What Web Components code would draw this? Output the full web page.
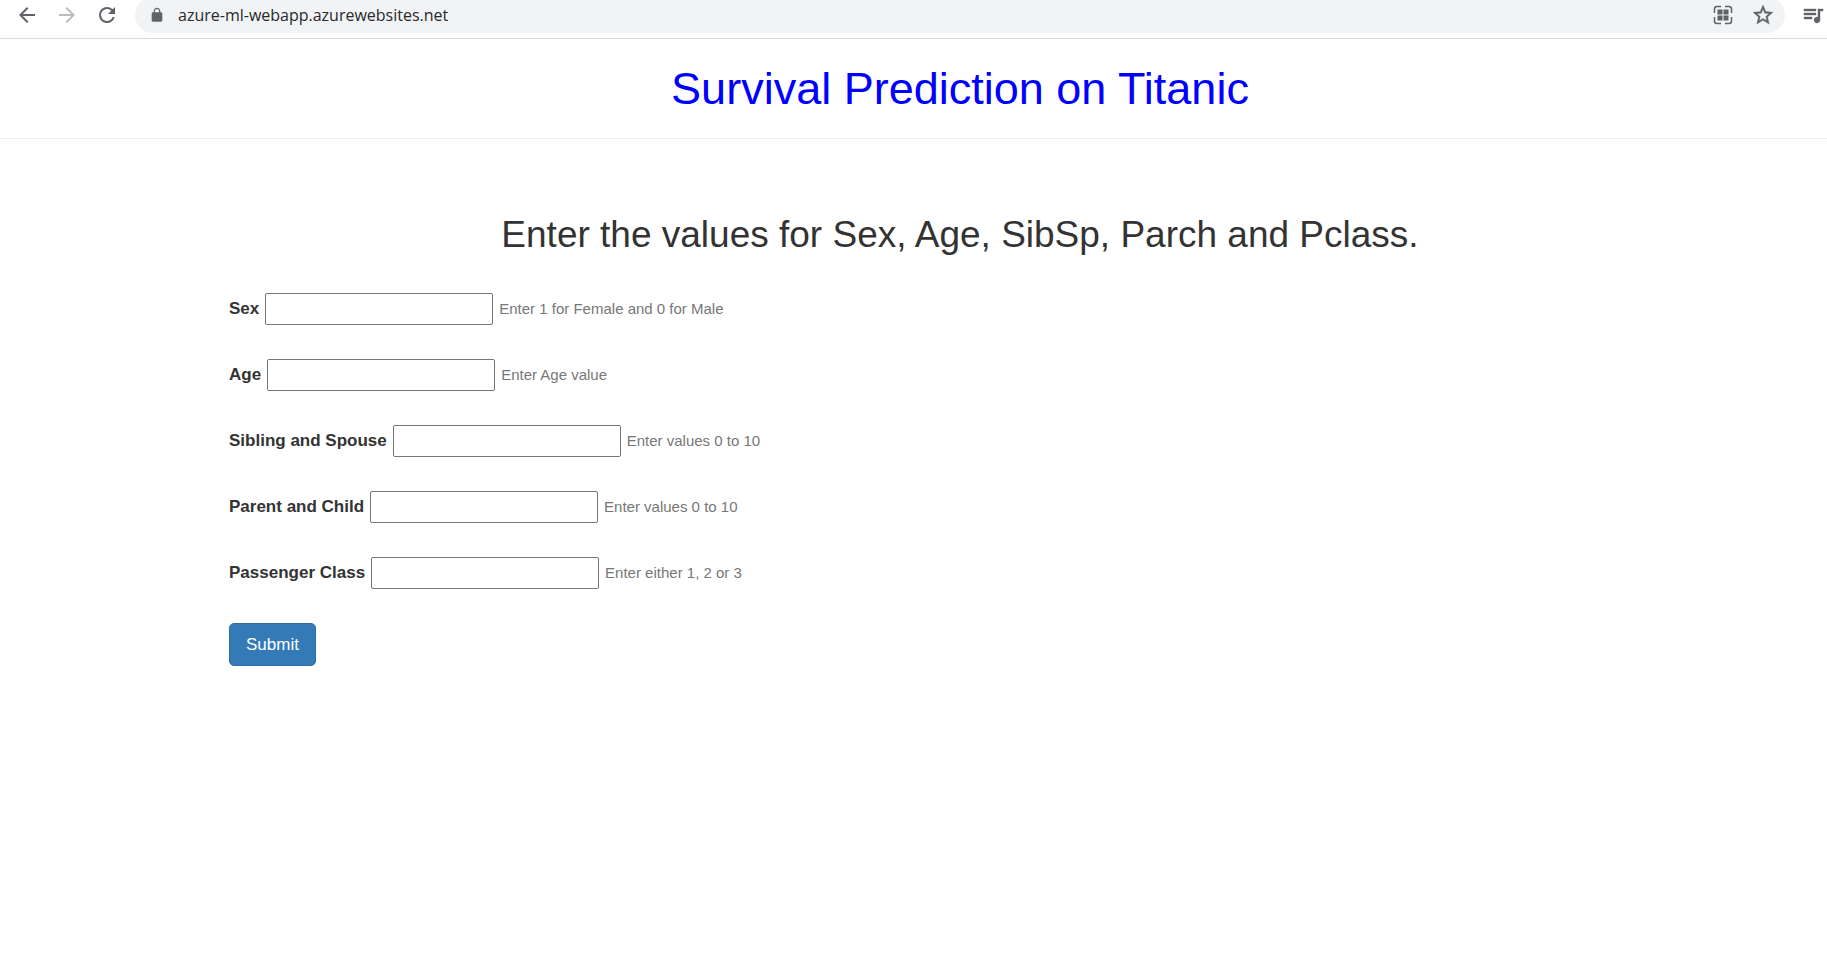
<!DOCTYPE html>
<html lang="en">
<head>
<meta charset="utf-8">
<title>Survival Prediction on Titanic</title>
<style>
body { margin: 0; background: #fff; color: #333; font-family: "Liberation Sans", Arial, sans-serif; }
</style>
</head>
<body>
<browser-bar address="azure-ml-webapp.azurewebsites.net"></browser-bar>
<page-header>Survival Prediction on Titanic</page-header>
<prediction-form>
  <span slot="heading">Enter the values for Sex, Age, SibSp, Parch and Pclass.</span>
  <form-field label="Sex" hint="Enter 1 for Female and 0 for Male"></form-field>
  <form-field label="Age" hint="Enter Age value"></form-field>
  <form-field label="Sibling and Spouse" hint="Enter values 0 to 10"></form-field>
  <form-field label="Parent and Child" hint="Enter values 0 to 10"></form-field>
  <form-field label="Passenger Class" hint="Enter either 1, 2 or 3"></form-field>
  <submit-button>Submit</submit-button>
</prediction-form>
<script>
const icons = {
  back: '<path d="M20 11H7.83l5.59-5.59L12 4l-8 8 8 8 1.41-1.41L7.83 13H20v-2z"/>',
  forward: '<path d="M12 4l-1.41 1.41L16.17 11H4v2h12.17l-5.58 5.59L12 20l8-8z"/>',
  reload: '<path d="M17.65 6.35A7.96 7.96 0 0 0 12 4a8 8 0 1 0 7.73 10h-2.08A6 6 0 1 1 12 6c1.66 0 3.14.69 4.22 1.78L13 11h7V4l-2.35 2.35z"/>',
  lock: '<path d="M18 8h-1V6c0-2.76-2.24-5-5-5S7 3.240 7 6v2H6c-1.100 0-2 .9-2 2v10c0 1.100.9 2 2 2h12c1.100 0 2-.9 2-2V10c0-1.100-.9-2-2-2zM8.900 8V6c0-1.710 1.390-3.100 3.100-3.100s3.100 1.390 3.100 3.100v2z"/>',
  code: '<path d="M6.500 6.500h5v5h-5zM12.500 6.500h5v5h-5zM6.500 12.500h5v5h-5zM12.500 12.500h5v5h-5z"/><path fill="none" stroke="currentColor" stroke-width="1.500" d="M3.500 10V6a2.500 2.500 0 0 1 2.500-2.500h4M14 3.500h4A2.500 2.500 0 0 1 20.500 6v4M20.500 14v4a2.500 2.500 0 0 1-2.500 2.500h-4M10 20.500H6A2.500 2.500 0 0 1 3.500 18v-4"/>',
  star: '<path stroke="currentColor" stroke-width=".4" d="M22 9.240l-7.190-.62L12 2 9.190 8.630 2 9.240l5.460 4.730L5.820 21 12 17.270 18.180 21l-1.630-7.030L22 9.240zM12 15.400l-3.760 2.270 1-4.280-3.320-2.880 4.380-.38L12 6.100l1.710 4.040 4.380.38-3.320 2.880 1 4.280L12 15.400z"/>',
  queue: '<path stroke="currentColor" stroke-width=".4" d="M15 6H3v2h12V6zm0 4H3v2h12v-2zM3 16h8v-2H3v2zM17 6v8.180c-.31-.11-.65-.18-1-.18-1.660 0-3 1.340-3 3s1.340 3 3 3 3-1.340 3-3V8h3V6h-5z"/>'
};
const icon = (name, size = 24) =>
  `<svg viewBox="0 0 24 24" width="${size}" height="${size}" aria-hidden="true">${icons[name]}</svg>`;

customElements.define('browser-bar', class extends HTMLElement {
  constructor() {
    super();
    this.attachShadow({ mode: 'open' }).innerHTML = `
      <style>
        :host { display: flex; align-items: center; height: 39px; box-sizing: border-box;
          padding: 0 2px 8px 15px; border-bottom: 1px solid #d9dadc; color: #5f6368; overflow: hidden; }
        button { display: block; flex: none; border: 0; padding: 0; margin: 0 16px 0 0; background: none; color: inherit; }
        button:disabled { color: #babcbe; }
        svg { display: block; flex: none; fill: currentColor; }
        .address { flex: 1; min-width: 0; display: flex; align-items: center; height: 36px; box-sizing: border-box;
          padding-left: 14px; border-radius: 18px; background: #f1f3f4; }
        .address button { margin: 0 0 0 16px; }
        .address button:last-child { margin-right: 10px; }
        input { flex: 1; min-width: 0; border: 0; margin: 0; padding: 0 0 0 13px; background: none; outline: 0;
          color: #27292c; font: 16px/24px "Open Sans", "Noto Sans", sans-serif; }
        .media { margin: 0 0 0 16px; }
      </style>
      <button aria-label="Back">${icon('back')}</button>
      <button aria-label="Forward" disabled>${icon('forward')}</button>
      <button aria-label="Reload">${icon('reload')}</button>
      <div class="address">
        ${icon('lock', 16)}
        <input type="text" aria-label="Address" value="${this.getAttribute('address')}">
        <button aria-label="Page code">${icon('code')}</button>
        <button aria-label="Bookmark">${icon('star')}</button>
      </div>
      <button class="media" aria-label="Media">${icon('queue')}</button>`;
  }
});

customElements.define('page-header', class extends HTMLElement {
  constructor() {
    super();
    this.attachShadow({ mode: 'open' }).innerHTML = `
      <style>
        :host { display: block; padding: 25px 0 24px 93px; border-bottom: 1px solid #eee; text-align: center; }
        h1 { margin: 0; color: #00f; font-size: 45px; line-height: 50px; font-weight: 400; }
      </style>
      <h1><slot></slot></h1>`;
  }
});

customElements.define('prediction-form', class extends HTMLElement {
  constructor() {
    super();
    this.attachShadow({ mode: 'open' }).innerHTML = `
      <style>
        :host { display: block; padding-top: 75px; }
        h2 { margin: 0 0 37px; padding-left: 93px; text-align: center; font-size: 37px; line-height: 42px; font-weight: 400; }
        form { display: flex; flex-direction: column; align-items: flex-start; gap: 34px; padding-left: 229px; }
      </style>
      <h2><slot name="heading"></slot></h2>
      <form><slot></slot></form>`;
  }
});

customElements.define('form-field', class extends HTMLElement {
  constructor() {
    super();
    this.attachShadow({ mode: 'open' }).innerHTML = `
      <style>
        :host { display: flex; align-items: baseline; gap: 6px; height: 32px; }
        label { font-size: 17px; line-height: 24px; font-weight: 700; }
        input { width: 228px; height: 32px; box-sizing: border-box; margin: 0; padding: 1px 2px;
          border: 1px solid #767676; border-radius: 2px; background: #fff; color: inherit; font: 17px/24px "Liberation Sans", Arial, sans-serif; }
        small { color: #777; font-size: 15px; line-height: 24px; }
      </style>
      <label for="value">${this.getAttribute('label')}</label>
      <input id="value" type="text" aria-describedby="hint">
      <small id="hint">${this.getAttribute('hint')}</small>`;
  }
});

customElements.define('submit-button', class extends HTMLElement {
  constructor() {
    super();
    this.attachShadow({ mode: 'open' }).innerHTML = `
      <style>
        :host { display: block; }
        button { display: block; margin: 0; padding: 8px 16px; border: 1px solid #2e6da4; border-radius: 5px;
          background: #337ab7; color: #fff; font: 17px/25px "Liberation Sans", Arial, sans-serif; }
      </style>
      <button type="submit"><slot></slot></button>`;
  }
});
</script>
</body>
</html>
